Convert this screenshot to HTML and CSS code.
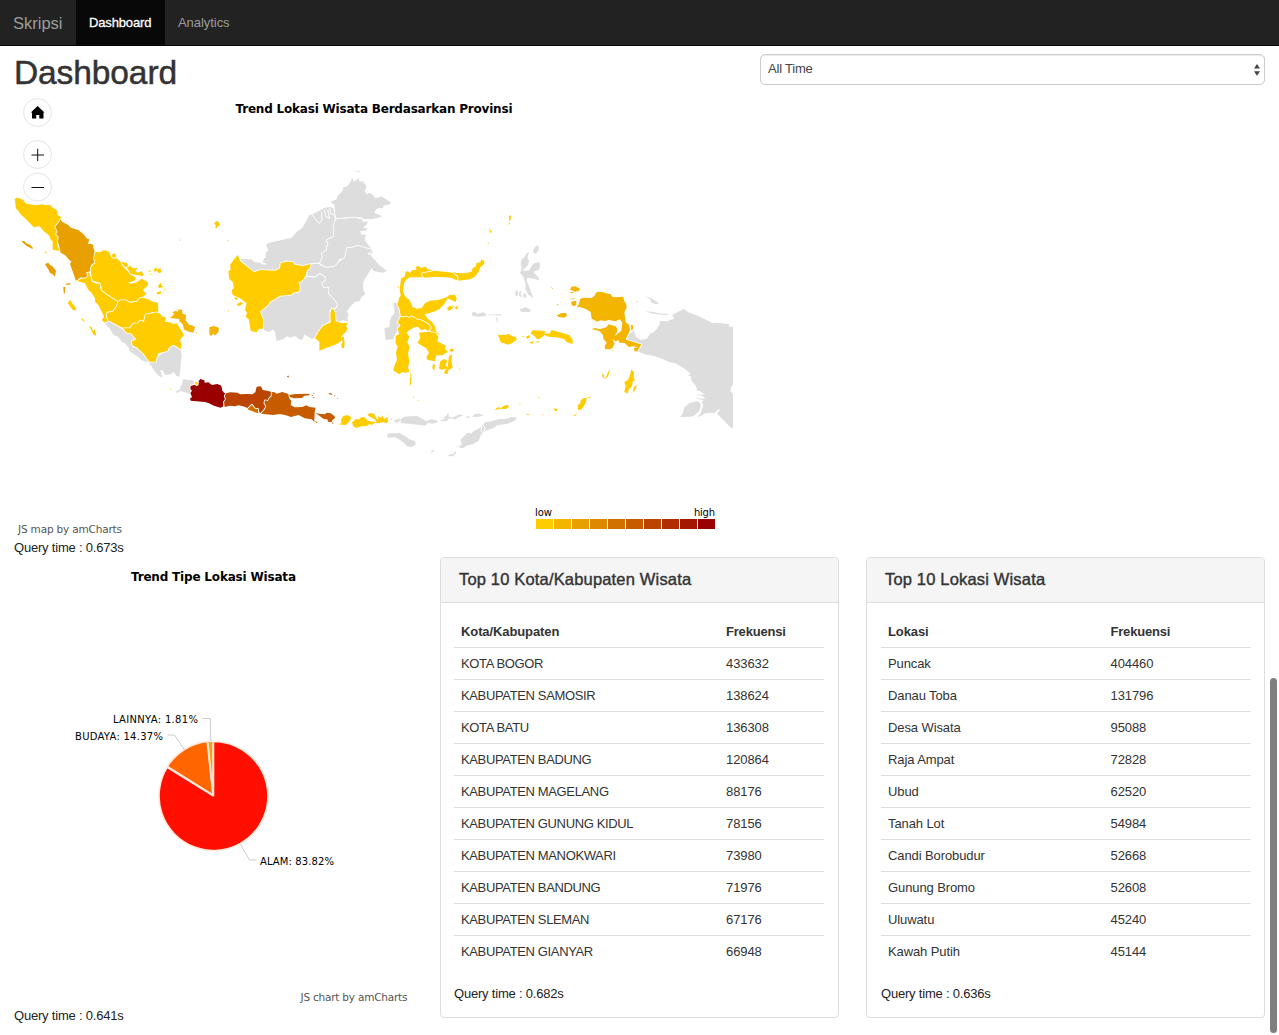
FILE: index.html
```html
<!DOCTYPE html>
<html lang="id">
<head>
<meta charset="utf-8">
<title>Dashboard - Skripsi</title>
<link rel="stylesheet" href="styles.css">
</head>
<body>
<nav class="navbar">
  <a class="brand">Skripsi</a>
  <a class="nav-link active">Dashboard</a>
  <a class="nav-link">Analytics</a>
</nav>
<main class="page">
  <section class="top-row">
    <div class="map-column">
      <h1>Dashboard</h1>
      <svg class="map" viewBox="14 91 719 447" role="img" aria-label="Peta Indonesia">
        <text class="chart-title" x="235.500" y="113" textLength="277">Trend Lokasi Wisata Berdasarkan Provinsi</text>

        <!-- Sumatra, north -->
        <g class="land" transform="translate(0 90) scale(.33333)">
          <path class="c0" d="M44 327L50 323L62 326L70 330L76 340L90 343L105 346L128 343L138 346L150 344L158 353L166 357L173 364L172 373L177 378L185 382L180 388L175 397L166 410L172 428L169 434L176 445L172 460L178 482L165 481L158 478L158 455L150 445L148 437L130 422L118 408L102 412L90 400L75 385L62 373L55 363L48 355L46 340Z"/>
          <path class="c2" d="M182 388L186 395L205 405L212 413L235 420L250 432L262 447L268 447L264 463L272 461L280 465L280 474L285 485L282 505L288 515L279 522L272 525L275 535L272 545L262 548L266 556L258 566L243 562L228 573L220 550L210 522L214 514L208 510L195 495L182 488L178 470L174 455L176 440L168 432L173 426L166 410L175 400Z"/>
          <path class="c2" d="M65 453L73 453L78 459L92 466L99 474L97 477L80 468L70 460ZM135 522L145 518L150 526L157 528L168 542L165 560L157 552L150 549L146 540ZM190 591L196 590L194 612L191 608ZM196 581L212 580L210 584L198 584Z"/>
          <path class="c0" d="M134 483L141 487L137 491ZM203 638L212 630L216 640L224 648L229 661L220 661L214 655ZM536 446h5l-2 9zM530 658h15v4h-15z"/>
        </g>
        <!-- Sumatra, centre and south -->
        <g class="land" transform="translate(80 240) scale(.33333)">
          <path class="c0" d="M-8 124L-1 118L18 114L26 106L21 99L28 97L36 125L50 131L62 130L60 143L65 152L90 170L115 185L108 200L98 215L82 218L80 232L88 245L75 250L66 240L72 230L66 217L60 205L55 195L45 185L45 175L35 159L25 149L15 130Z"/>
          <path class="c0" d="M46 35L60 37L72 30L88 36L93 52L110 55L118 62L131 70L130 80L140 91L150 102L168 113L164 122L148 127L142 127L154 131L170 127L185 116L204 127L203 137L188 150L199 162L188 172L170 184L150 188L137 181L122 182L115 184L90 168L65 150L65 140L60 128L38 122L34 105L32 85L40 73L46 70L42 55Z"/>
          <path class="c0" d="M115 185L122 181L137 181L150 188L170 185L180 175L188 173L205 178L218 185L234 188L235 215L215 217L204 221L197 222L190 243L178 241L174 250L160 250L150 265L128 265L105 252L88 245L80 230L82 218L98 215L110 200Z"/>
          <path class="c0" d="M128 265L150 265L160 251L174 250L180 242L192 245L197 223L210 222L228 217L240 221L248 230L258 232L255 245L270 247L280 252L290 250L300 265L312 285L300 300L305 315L302 330L293 323L280 315L265 327L265 335L248 337L235 340L232 350L230 365L212 368L195 355L191 344L168 322L155 318L152 302L165 295L158 290L152 281L138 278Z"/>
          <path class="none" d="M75 250L88 245L105 255L128 268L138 280L152 283L165 297L152 303L156 319L170 325L188 342L207 368L185 361L175 351L150 335L145 322L135 310L125 305L115 290L100 285L92 270Z"/>
          <path class="none" d="M207 368L230 367L232 352L248 339L265 335L268 325L280 317L292 324L302 330L305 345L301 388L298 410L290 408L280 395L275 402L255 404L248 391L241 390L247 413L236 407L225 395Z"/>
          <path class="c0" d="M95 44L104 40L109 46L106 53L97 52ZM124 66L140 68L145 78L136 82L130 76ZM140 82L152 78L158 85L175 84L166 91L170 97L192 103L188 108L165 104L152 101ZM175 98L185 93L190 103L183 106ZM203 94l8-4 1 5zM222 88l7-6 3 7 9-6 4 14-10 2-4-7-9 3zM234 138l8-10 3 8 5 5-13 3zM229 158l13-5 1 8-12 2zM250 145l8 5-5 1zM209 103l4-4 1 5zM297-1h4l-1 5zM5 234l7 5 2 7-8-6zM27 258l8 4 4 12 5-6 5 20-8-4-8-15zM268 445l6 2-1 3z"/>
          <path class="c1" d="M270 234L283 222L277 217L288 212L292 215L299 208L306 209L308 222L318 224L317 241L327 254L336 256L345 262L340 278L323 274L313 269L308 253L298 244L298 237ZM388 262L400 258L417 263L415 276L405 287L400 281L394 287L388 285ZM347 275l5 2-3 3z"/>
        </g>

        <!-- Kalimantan -->
        <g class="land" transform="translate(220 165) scale(.33333)">
          <path class="none" d="M335 115L334 109L350 103L353 92L368 77L370 67L382 64L392 51L396 38L402 50L410 45L416 38L419 50L429 49L435 58L440 65L434 78L440 88L448 83L460 90L463 98L474 98L484 94L512 112L510 118L490 122L489 130L477 129L468 133L463 144L484 152L482 156L455 163L430 162L422 156L405 158L395 162L382 157L368 158L350 162L345 145L343 119Z"/>
          <path class="none" d="M128 292L132 281L137 277L138 263L145 255L138 240L148 233L215 218L230 201L247 188L257 172L268 150L275 149L315 128L331 126L340 130L345 165L340 180L343 195L340 215L320 224L326 240L319 245L322 257L305 265L308 280L300 290L295 295L270 297L247 306L240 302L215 290L185 293L180 310L160 318L128 315L105 322L85 305L60 282L95 283L103 291L120 293L128 299L142 298Z"/>
          <path class="line" d="M277 150L288 165L298 175L306 165L304 140M313 134L317 155L329 160L323 134M329 128L332 145L342 150"/>
          <path class="none" d="M348 163L405 158L425 162L430 172L443 168L441 178L428 188L442 190L438 197L420 198L425 210L437 208L435 225L443 237L455 253L435 248L415 242L393 249L382 248L382 262L375 280L357 282L355 295L345 305L320 308L300 295L308 278L306 265L322 255L319 246L326 240L320 226L340 215L343 195L341 180Z"/>
          <path class="none" d="M262 315L272 298L295 296L310 305L320 308L345 305L357 290L375 278L382 248L393 249L415 242L435 249L452 252L458 262L453 273L465 285L475 298L500 317L490 323L461 319L455 309L445 325L430 350L429 372L436 388L424 397L419 408L405 410L398 418L390 426L380 440L386 446L382 460L385 470L370 466L350 472L340 435L352 415L338 399L325 385L325 365L310 370L305 355L315 345L315 335L300 325L285 335L262 332Z"/>
          <path class="none" d="M120 440L150 410L170 395L180 392L204 388L232 383L240 366L235 350L262 335L285 338L300 327L314 336L315 346L304 352L310 370L325 368L325 388L340 402L352 418L345 430L337 429L329 435L330 468L310 482L295 500L285 520L273 521L253 508L248 523L241 525L225 513L211 518L200 514L190 523L170 528L165 500L157 493L148 502L130 495L130 465Z"/>
          <path class="c0" d="M30 300L42 283L54 270L59 287L103 322L120 315L165 317L180 310L182 294L199 290L219 291L224 299L250 303L272 297L270 308L260 318L257 333L243 350L235 351L240 365L238 379L220 383L214 389L180 392L164 403L150 410L144 420L120 440L130 465L128 492L117 491L110 502L92 497L89 480L87 464L77 455L81 443L75 435L80 415L60 400L38 390L35 375L42 370L38 350L28 343L25 319L32 314ZM44 397l10 2-3 6-7-3zM49 418l15-8 5 6-12 8zM23 436l5 2-3 2zM-15 170l8-2 7 9-2 6-6 1 0 6-6-1 1-9-4-4zM21 224l5 2-3 3z"/>
          <path class="c0" d="M335 430L342 435L345 445L347 468L365 475L383 473L378 485L383 490L378 500L362 515L368 524L360 530L350 537L298 557L298 530L285 520L297 498L310 482L332 472L331 447ZM365 516L371 514L374 533L372 550L366 549L363 540L368 532Z"/>
          <path class="none" d="M404 21l4-2 1 4zM413 18h7l-4 6zM446 266l6-3 1 5z"/>
        </g>

        <!-- Sulawesi and Maluku -->
        <g class="land" transform="translate(375 210) scale(.33333)">
          <path class="c0" d="M72 265L77 256L74 240L78 205L89 200L92 185L99 184L105 190L112 180L124 180L123 170L130 168L138 173L152 170L158 178L180 182L166 186L145 188L140 197L150 202L105 202L93 209L87 220L84 245L91 260L104 270L112 290L125 296L140 294L150 280L165 272L190 270L215 262L222 256L240 254L245 265L242 276L229 270L218 265L208 282L194 297L175 306L155 311L149 313L158 326L172 337L181 352L182 362L195 375L180 368L165 365L168 350L150 340L120 325L95 320L75 322L72 306L63 285L69 278Z"/>
          <path class="c0" d="M142 190L180 182L235 188L247 200L250 212L238 208L230 203L180 200L150 203L142 199Z"/>
          <path class="c0" d="M232 185L245 189L270 190L290 185L293 174L302 170L305 159L316 157L319 149L328 152L327 163L316 172L311 185L299 201L285 208L250 212L250 199L241 192Z"/>
          <path class="none" d="M55 280L62 276L65 285L72 300L75 322L69 335L73 347L64 368L60 375L55 388L32 390L28 355L43 351L45 333L49 320L59 308Z"/>
          <path class="c0" d="M75 322L95 320L104 324L109 318L124 328L137 330L160 343L168 354L160 363L150 357L139 361L129 350L118 352L105 359L95 368L103 380L97 396L104 412L99 430L103 455L99 472L103 485L92 488L83 486L72 493L64 487L55 482L58 468L66 450L63 427L68 410L62 400L62 377L73 372L68 356L77 346L68 338Z"/>
          <path class="c0" d="M132 368L160 365L183 369L190 382L187 394L201 401L214 408L209 415L219 426L208 432L202 436L184 436L180 454L158 450L154 442L162 428L154 415L141 407L127 398L136 385ZM196 454L207 447L217 452L212 465L218 474L200 480L192 475ZM222 437L232 434L229 452L233 473L220 480L219 491L208 491L208 484L218 472L219 461ZM223 418l14-2-2 8-8 1zM174 461l6 4-2 18-6-9zM252 475l5 2-4 2zM106 485l5 18-3 22-3-8zM216 294l9-7 9 5-8 9-7 1zM238 291l12-4-4 12zM232 285l5 5-4 5zM68 229l5 3-4 2z"/>
          <path class="none" d="M435 190L440 175L437 162L440 147L449 141L455 129L462 127L457 143L462 152L459 166L451 174L442 182L461 182L475 161L493 155L495 171L491 180L475 185L491 203L493 212L478 206L457 203L455 212L463 232L475 265L460 254L452 238L451 218L444 198ZM474 127L476 117L485 106L492 110L490 122L482 132ZM420 245l8-5 1 15-6 5zM431 248l8-7-2 12 6 9-10-3zM444 254l7-6 4 14-7 3zM290 308L300 306L307 311L325 307L335 314L332 317L313 320L292 318ZM335 314L380 312L378 316L340 316ZM362 321l5 3 2 17-4-7zM435 298L450 292L459 294L468 302L464 306L437 305Z"/>
          <path class="c0" d="M369 374L391 375L401 371L411 379L423 381L425 389L413 398L400 404L377 397ZM467 370L473 361L513 363L507 370L523 371L530 360L560 368L583 375L593 389L593 402L575 396L567 387L545 382L520 380L509 375L495 386L486 388L479 379ZM440 380l8-3-3 5zM452 381l10-6 4 6-9 5zM461 398l16-5-4 8zM480 395l14-1-4 4zM402 18l6-2-1 14-4 4zM402 38l4 2-6 5zM341 53l5 6 5 7-4 4zM338 97l4 3-3 3zM526 227l8 8-3 1z"/>
        </g>

        <!-- Papua and the eastern islands -->
        <g class="land" transform="translate(540 270) scale(.33333)">
          <path class="c1" d="M110 112L117 102L120 88L128 83L155 84L164 77L168 68L175 65L190 67L198 70L212 73L217 80L225 82L250 80L252 91L259 104L260 112L253 127L257 157L267 164L270 180L265 193L258 207L305 222L294 245L283 243L282 234L295 232L279 229L267 231L254 219L240 218L235 214L238 201L237 188L244 182L247 158L240 148L226 154L207 150L194 153L182 151L172 155L155 146L152 126L139 118L120 111ZM154 177L165 174L178 178L199 172L206 163L217 166L227 169L232 177L231 187L221 201L220 213L224 220L217 235L209 238L195 237L194 229L200 218L190 206L189 195L178 183ZM218 202L240 186L244 204L226 215ZM93 95L109 92L109 105L101 109L95 104ZM80 56L91 60L94 50L106 49L121 57L117 62L105 65L94 60ZM86 67l18-2-7 4zM49 137L63 130L77 128L81 137L72 143L58 141ZM50 101l7 2-6 2zM83 87l22-2-3 3zM29 48l11 8-2 1zM273 166l5-2 2 11-6 8z"/>
          <path class="none" d="M260 207L269 192L281 181L288 201L304 210L320 207L331 191L343 185L359 165L360 153L380 154L402 146L397 134L432 117L443 126L475 138L501 151L519 160L530 158L566 162L567 170L580 170L580 344L572 353L572 364L580 374V475L571 472L548 448L531 431L540 418L535 418L524 429L511 428L495 430L484 437L472 441L482 430L490 405L486 397L491 391L465 384L496 386L486 377L464 373L495 374L480 364L471 362L468 348L455 333L452 318L443 316L452 312L439 300L422 289L404 279L389 277L368 267L341 258L320 254L294 245L308 222ZM421 441L428 430L434 411L449 399L474 393L483 404L478 423L464 436L453 440ZM316 79L332 83L344 91L358 101L344 102L333 97L331 87ZM316 124L341 126L357 130L389 132L377 135L338 131ZM287 95l7-2-1 6z"/>
          <path class="c0" d="M253 365L257 347L253 337L264 330L271 312L274 298L282 306L281 324L285 330L278 335L276 349L266 359L263 371ZM285 348l6-4-5 13-3 8-4-3 3-10zM186 310l6 4 1 13-5-6zM198 320l6-13 7-11-6 21-11 12zM114 420L113 406L121 400L122 391L132 384L140 384L138 397L132 408L123 419ZM138 382l16-1-5 3zM98 439l13-10-5 8zM41 415l12 2-3 7-5-1zM5 433l8 2-7 1zM213 239l8 4-3 1z"/>
        </g>

        <!-- Java, Bali -->
        <g class="land" transform="translate(170 360) scale(.33333)">
          <path class="none" d="M15 97L30 88L32 77L36 76L38 60L42 57L55 61L66 59L75 66L73 73L62 78L62 103L45 97L31 93L22 98Z"/>
          <path class="c9" d="M62 78L75 74L86 76L84 65L91 57L103 61L104 68L115 67L126 75L142 72L154 77L157 92L162 98L168 100L162 109L168 118L160 125L160 139L152 143L132 137L117 130L105 126L62 122L60 116L66 111L61 99L66 92L61 87Z"/>
          <path class="c6" d="M168 100L181 97L203 98L210 103L232 102L247 103L256 97L260 80L273 79L278 90L291 92L303 95L303 106L298 113L294 123L285 120L282 131L288 139L281 149L275 159L269 158L264 145L255 145L246 134L235 145L219 139L205 136L195 139L180 137L164 141L162 126L168 118L164 108Z"/>
          <path class="c4" d="M232 148L246 134L255 146L264 147L265 160L247 154Z"/>
          <path class="c5" d="M305 96L314 97L320 101L337 96L355 102L357 114L364 123L362 135L374 142L397 141L409 136L418 141L437 143L434 157L433 185L425 178L404 175L386 165L363 171L348 166L330 162L310 165L273 161L283 150L289 139L283 129L285 121L294 123L299 113L305 109ZM357 105L377 102L418 101L418 106L403 107L396 114L371 115L361 111ZM350 48l7-1-2 6zM437 159L452 162L465 163L470 158L482 160L494 169L495 174L488 179L484 187L474 185L472 178L461 177ZM434 184l9 2-3 3zM486 187l6 2-5 2zM475 100l9 0 3 5-9-2zM492 105l5 3-4 1zM500 113l5 3h-4zM425 105l5 1-3 3zM430 98l5 1-5 2zM427 112l9 1-6 2z"/>
          <path class="c0" d="M75 66L85 66L80 76L76 72Z"/>
        </g>

        <!-- Nusa Tenggara -->
        <g class="land" transform="translate(330 370) scale(.33333)">
          <path class="c0" d="M34 160L33 149L40 138L53 135L64 142L58 155L47 165L24 163ZM66 157L78 147L87 148L94 142L105 142L113 153L124 154L140 157L134 148L123 142L112 135L119 129L132 131L139 144L145 151L144 138L152 143L158 137L162 148L172 141L175 155L169 160L160 156L147 160L134 158L128 164L118 163L110 168L94 169L79 174L69 168ZM174 131l3 2-2 2zM494 121L502 112L515 113L520 108L533 104L537 110L528 117L510 116ZM240 21h3v20l-3 8zM249 79l5 3-3 3zM256 88l13 4-2 1zM567 103l4-2v4zM588 131l12 2-7 2zM637 133l6 1-4 1zM623 82l6 0-2 3z"/>
          <path class="none" d="M180 148l7-5-1 8zM190 153l18-8 2 6-8 8zM211 148L222 141L235 139L261 138L280 148L287 154L304 148L320 151L324 157L306 161L294 158L285 167L251 163L235 161L213 159ZM328 153L347 145L339 143L348 138L355 128L356 140L370 142L389 133L400 136L384 142L375 149L366 144L355 147L350 154ZM407 142l8-5 7 8zM426 141L435 132L448 131L461 136L446 140ZM170 195L178 190L199 190L209 188L219 196L229 200L238 208L254 212L258 223L245 231L231 229L221 218L207 208L195 202L174 203ZM385 232L395 223L391 209L402 199L410 190L426 187L450 173L466 157L487 153L505 148L528 147L544 141L562 143L551 154L529 162L502 166L489 175L466 183L452 196L446 213L428 223L409 227L400 235ZM352 258L363 251L370 253L376 242L379 250L369 259ZM303 244l7-5 3 5-8 3zM379 229l5-3 1 4z"/>
          <path class="line" d="M413 183L424 190L427 180M459 165L466 177L459 189L453 182L455 169"/>
        </g>

        <g class="control"><circle cx="37.500" cy="112.500" r="14"/><circle cx="37.500" cy="154.500" r="14"/><circle cx="37.500" cy="187" r="14"/></g>
        <path d="M37.600 106L44.500 112.500H43.500V118.500H39.300V115H36.200V118.500H32V112.500H30.800Z"/>
        <path class="control-mark" d="M31.500 155H44M37.700 148.800V161M31.500 187.500H44"/>

        <text class="small" x="535" y="516" textLength="17">low</text>
        <text class="small" x="694" y="516" textLength="21">high</text>
        <g class="legend">
          <path class="c0" d="M536 519h17v10h-17z"/><path class="c1" d="M554 519h17v10h-17z"/><path class="c2" d="M572 519h17v10h-17z"/><path class="c3" d="M590 519h17v10h-17z"/><path class="c4" d="M608 519h17v10h-17z"/><path class="c5" d="M626 519h17v10h-17z"/><path class="c6" d="M644 519h17v10h-17z"/><path class="c7" d="M662 519h17v10h-17z"/><path class="c8" d="M680 519h17v10h-17z"/><path class="c9" d="M698 519h17v10h-17z"/>
        </g>
        <text class="credit" x="18" y="533" textLength="104">JS map by amCharts</text>
      </svg>
      <p class="query">Query time : 0.673s</p>
    </div>
    <div class="filter-column">
      <div class="select"><span>All Time</span>
        <svg class="arrows" viewBox="0 0 6 12"><path d="M3 0L6 4.500H0ZM0 7.200H6L3 11.700Z"/></svg>
      </div>
    </div>
  </section>

  <section class="bottom-row">
    <div class="pie-column">
      <svg class="pie" viewBox="14 557 399 449" role="img" aria-label="Tipe lokasi wisata">
        <text class="chart-title" x="131" y="581" textLength="165">Trend Tipe Lokasi Wisata</text>
        <g class="slices">
          <path fill="#ff0f00" d="M213.500 796V741.500A54.500 54.500 0 1 1 167.160 767.320Z"/>
          <path fill="#ff6600" d="M213 795L167.300 766.500A54.500 54.500 0 0 1 207.200 741.500Z"/>
          <path fill="#ff9e01" d="M213 795L207.800 741.500A54.500 54.500 0 0 1 213 741Z"/>
        </g>
        <path class="leader" d="M202.500 718.500H210.300L210.800 741M167.500 735H174.500L184.500 750M240.500 844.500L249.500 860H256.500"/>
        <text class="small" x="113" y="723" textLength="85">LAINNYA: 1.81%</text>
        <text class="small" x="75" y="740" textLength="88">BUDAYA: 14.37%</text>
        <text class="small" x="260" y="865" textLength="74">ALAM: 83.82%</text>
        <text class="credit" x="300.500" y="1001" textLength="107">JS chart by amCharts</text>
      </svg>
      <p class="query">Query time : 0.641s</p>
    </div>

    <div class="panel">
      <h2>Top 10 Kota/Kabupaten Wisata</h2>
      <div class="panel-body">
        <table class="cities">
          <thead><tr><th>Kota/Kabupaten</th><th>Frekuensi</th></tr></thead>
          <tbody>
            <tr><td>KOTA BOGOR</td><td>433632</td></tr>
            <tr><td>KABUPATEN SAMOSIR</td><td>138624</td></tr>
            <tr><td>KOTA BATU</td><td>136308</td></tr>
            <tr><td>KABUPATEN BADUNG</td><td>120864</td></tr>
            <tr><td>KABUPATEN MAGELANG</td><td>88176</td></tr>
            <tr><td>KABUPATEN GUNUNG KIDUL</td><td>78156</td></tr>
            <tr><td>KABUPATEN MANOKWARI</td><td>73980</td></tr>
            <tr><td>KABUPATEN BANDUNG</td><td>71976</td></tr>
            <tr><td>KABUPATEN SLEMAN</td><td>67176</td></tr>
            <tr><td>KABUPATEN GIANYAR</td><td>66948</td></tr>
          </tbody>
        </table>
        <p class="query">Query time : 0.682s</p>
      </div>
    </div>

    <div class="panel">
      <h2>Top 10 Lokasi Wisata</h2>
      <div class="panel-body shifted">
        <table class="places">
          <thead><tr><th>Lokasi</th><th>Frekuensi</th></tr></thead>
          <tbody>
            <tr><td>Puncak</td><td>404460</td></tr>
            <tr><td>Danau Toba</td><td>131796</td></tr>
            <tr><td>Desa Wisata</td><td>95088</td></tr>
            <tr><td>Raja Ampat</td><td>72828</td></tr>
            <tr><td>Ubud</td><td>62520</td></tr>
            <tr><td>Tanah Lot</td><td>54984</td></tr>
            <tr><td>Candi Borobudur</td><td>52668</td></tr>
            <tr><td>Gunung Bromo</td><td>52608</td></tr>
            <tr><td>Uluwatu</td><td>45240</td></tr>
            <tr><td>Kawah Putih</td><td>45144</td></tr>
          </tbody>
        </table>
        <p class="query">Query time : 0.636s</p>
      </div>
    </div>
  </section>
</main>
<div class="scroll-thumb"></div>
</body>
</html>
```

FILE: styles.css
```css
* { box-sizing: border-box; }
body {
  margin: 0;
  height: 1035px;
  position: relative;
  overflow: hidden;
  background: #fff;
  color: #333;
  font: 13px/18px "Liberation Sans", Arial, sans-serif;
}
h1, h2, p { margin: 0; }

.navbar {
  display: flex;
  height: 46px;
  background: #222;
  border-bottom: 1px solid #080808;
}
.brand, .nav-link { line-height: 45px; color: #9d9d9d; }
.brand { width: 76px; padding-left: 13px; font-size: 16.500px; line-height: 46px; }
.nav-link { padding: 0 13px; letter-spacing: -.05px; }
.nav-link.active {
  width: 89px;
  background: #080808;
  color: #fff;
  letter-spacing: -.15px;
  -webkit-text-stroke: .3px #fff;
}

.page { padding: 0 14px; }
.top-row { display: grid; grid-template-columns: 719px 505px; column-gap: 27px; }
h1 {
  height: 45px;
  padding-top: 9px;
  font-size: 33.500px;
  font-weight: 400;
  line-height: 36px;
  letter-spacing: -.1px;
  -webkit-text-stroke: .5px #333;
}
.map { display: block; width: 719px; height: 447px; }
.query { line-height: 19px; letter-spacing: -.2px; color: #222; }

.filter-column { padding-top: 8px; }
.select {
  display: flex;
  justify-content: space-between;
  align-items: center;
  height: 31px;
  padding: 0 4px 2px 7px;
  border: 1px solid #ccc;
  border-radius: 5px;
  box-shadow: inset 0 1px 1px rgba(0, 0, 0, .075);
  color: #444;
  letter-spacing: -.2px;
}
.arrows { width: 6px; height: 12px; margin-top: 2px; fill: #444; }

.chart-title { font: bold 12px "DejaVu Sans", Verdana, sans-serif; fill: #000; }
.small { font: 10px "DejaVu Sans", Verdana, sans-serif; fill: #000; }
.credit { font: 10.500px "DejaVu Sans", Verdana, sans-serif; fill: #555; }

.land path { stroke: #fff; stroke-width: 5px; stroke-linejoin: round; paint-order: stroke; }
.land .line { fill: none; stroke-width: 3px; }
.none { fill: #ddd; }
.c0 { fill: #fc0; }
.c1 { fill: #f4b500; }
.c2 { fill: #e89f00; }
.c3 { fill: #d80; }
.c4 { fill: #d17100; }
.c5 { fill: #c65b00; }
.c6 { fill: #b40; }
.c7 { fill: #af2d00; }
.c8 { fill: #a41700; }
.c9 { fill: #900; }
.control circle { fill: #fff; stroke: #e4e4e4; stroke-width: 1px; }
.control-mark { stroke: #111; stroke-width: 1px; fill: none; }

.bottom-row { display: grid; grid-template-columns: repeat(3, 399px); column-gap: 27px; }
.pie { display: block; width: 399px; height: 449px; }
.slices path { stroke: #ffe9dc; stroke-width: 1.600px; stroke-linejoin: bevel; }
.leader { fill: none; stroke: #ccc; stroke-width: 1px; }

.panel {
  height: 461px;
  border: 1px solid #ddd;
  border-radius: 4px;
  background: #fff;
  overflow: hidden;
}
.panel h2 {
  height: 45px;
  padding-left: 18px;
  border-bottom: 1px solid #ddd;
  background: #f5f5f5;
  font-size: 16.500px;
  font-weight: 400;
  line-height: 43px;
  letter-spacing: .17px;
  -webkit-text-stroke: .4px #333;
}
.panel-body { padding: 12px 14px 0 13px; }
.panel-body.shifted { padding: 12px 13px 0 14px; }
table { width: 370px; table-layout: fixed; border-collapse: collapse; }
th, td { height: 32px; padding: 2px 7px 0; text-align: left; line-height: 18px; letter-spacing: -.1px; }
th:last-child { letter-spacing: -.2px; }
td { border-top: 1px solid #ddd; }
.cities td:first-child { letter-spacing: -.36px; }
.cities th:first-child { width: 265px; }
.places th:first-child { width: 222.500px; }
.panel .query { padding-top: 17px; }
.scroll-thumb {
  position: absolute;
  left: 1270px;
  top: 678px;
  width: 7px;
  height: 355px;
  border-radius: 4px;
  background: #7f7f7f;
}
```
